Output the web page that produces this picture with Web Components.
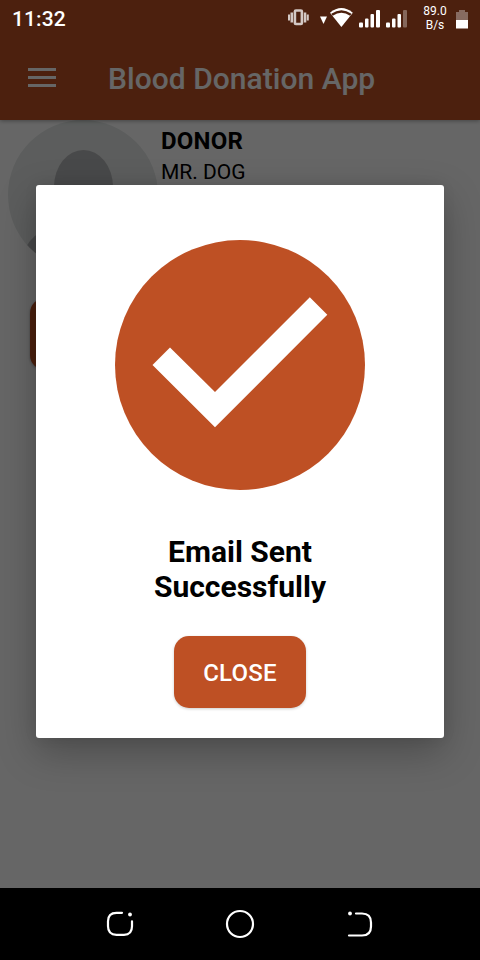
<!DOCTYPE html>
<html lang="en"><head><meta charset="utf-8"><title>Blood Donation App</title>
<style>body{margin:0;font-family:Roboto,"Liberation Sans",sans-serif}</style></head>
<body><donation-app></donation-app>
<script>
const define=(name,html)=>customElements.define(name,class extends HTMLElement{
  constructor(){super();this.attachShadow({mode:'open'}).innerHTML=html}
});

define('status-bar',`<style>
:host{display:flex;height:36px;color:#fff;position:relative;box-sizing:border-box;padding-left:12px}
time{font-size:21px;font-weight:500;line-height:38px;width:268px;flex:none;letter-spacing:.1px}
svg{width:136px;height:36px;flex:none;display:block}
.speed{width:38px;font-size:12px;line-height:14px;padding-top:4px;text-align:center;flex:none}
.battery{width:26px}
</style><time>11:32</time>
<svg viewBox="280 0 136 36">
<g fill="#d3c8c4"><path d="M288 14.500h2v6h-2zM290.500 12.500h2.500v10h-2.500zM303.800 12.500h2.500v10h-2.500zM306.800 14.500h2v6h-2z"/><rect x="294.900" y="10.500" width="7" height="13.500" rx="1" fill="none" stroke="#d3c8c4" stroke-width="2.600"/></g>
<path fill="#fff" d="M320 16.500h7l-3.500 7.500z"/>
<path fill="#fff" d="M330 12.700Q341.400 3.500 352.800 12.700L341.400 27z"/>
<path d="M332 14.800Q341.400 8 350.800 14.800" fill="none" stroke="#4c200e" stroke-width="2.400"/>
<g fill="#fff"><rect x="359" y="22.500" width="4" height="5" rx="1"/><rect x="365" y="18.500" width="3.500" height="9" rx="1"/><rect x="370.500" y="14" width="3.500" height="13.500" rx="1"/><rect x="376" y="10" width="4" height="17.500" rx="1"/>
<rect x="386" y="22.500" width="4" height="5" rx="1"/><rect x="392" y="18.500" width="3.500" height="9" rx="1"/><rect x="397.500" y="14" width="3.500" height="13.500" rx="1"/><rect x="403" y="10" width="4" height="17.500" rx="1" opacity=".32"/></g></svg>
<div class="speed">89.0<br>B/s</div>
<svg class="battery" viewBox="454 0 26 36"><path fill="#876b61" d="M456 12h3v-2h6v2h3v8h-12z"/><path fill="#fff" d="M456 20h12v8.500h-12z"/></svg>`);

define('app-header',`<style>
:host{display:flex;align-items:center;box-sizing:border-box;height:120px;padding:36px 0 0 28px;gap:52px;background:#be5024;color:#fff;box-shadow:0 1px 4px #0005;position:relative}
svg{width:28px;height:20px;margin-top:-2px}h1{margin:2px 0 0;font-size:30px;font-weight:500;line-height:36px;letter-spacing:.03px}
</style><svg viewBox="0 0 28 20"><path d="M0 1h28v3H0zM0 9h28v3H0zM0 17h28v3H0z" fill="#fff"/></svg><h1><slot></slot></h1>`);

define('donor-card',`<style>
:host{display:grid;grid-template-columns:150px 1fr;column-gap:3px;padding-left:8px;color:#000}
svg{width:150px;height:150px;display:block}
b{display:block;font-size:24px;font-weight:700;line-height:28px;margin-top:7px;letter-spacing:.2px}
.name{font-size:21px;line-height:25px;margin-top:5px}
.action{width:200px;height:72px;border-radius:15px;background:#be5024;margin:28px 0 0 22px;box-shadow:0 1px 3px #0005}
</style><svg viewBox="0 0 150 150"><defs><clipPath id="c"><circle cx="75" cy="75" r="75"/></clipPath></defs><g clip-path="url(#c)"><path fill="#e5e9e8" d="M0 0h150v150H0z"/><ellipse cx="75.500" cy="67" rx="29.500" ry="37" fill="#b5b6b8"/><path fill="#b5b6b8" d="M18 127Q24 115 40 108L75 98l35 10q23 9 28 42H10z"/></g></svg>
<div><b><slot name="role"></slot></b><div class="name"><slot name="name"></slot></div></div><div class="action"></div>`);

define('action-button',`<style>:host{display:block}
button{display:block;width:132px;height:72px;border:0;border-radius:15px;background:#be5024;color:#fff;font:500 24px/70px Roboto,"Liberation Sans",sans-serif;letter-spacing:.25px;padding:2px 0 0;box-shadow:0 1px 3px #0003}
</style><button><slot></slot></button>`);

define('success-dialog',`<style>
:host{display:flex;flex-direction:column;align-items:center;box-sizing:border-box;width:408px;height:553px;padding-top:55px;background:#fff;border-radius:3px;color:#000;box-shadow:0 14px 38px #0004,0 0 14px #0001}
svg{width:250px;height:250px;display:block}h2{font-size:30px;line-height:35px;font-weight:700;text-align:center;margin:44px 0 32px;width:220px}
</style><svg viewBox="0 0 250 250"><circle cx="125" cy="125" r="125" fill="#be5024"/><path d="M37.500 125 55 107.500 100 152 194.800 57.300 212.300 74.800 100 187.300z" fill="#fff"/></svg>
<h2><slot></slot></h2><action-button>CLOSE</action-button>`);

define('system-nav',`<style>:host{display:block;height:72px;background:#000}svg{display:block;width:480px;height:72px}</style>
<svg viewBox="0 888 480 72" fill="none" stroke="#fff" stroke-width="2.200" stroke-linecap="round"><path d="M122 912.800h-5.500q-8.500 0-8.500 8.500v5q0 8.500 8.500 8.500h7.500q8 0 8-8.500v-5"/><circle cx="130" cy="914.500" r="1.900" fill="#fff" stroke="none"/><circle cx="240" cy="924" r="13"/><path d="M356 913.500h6q9 0 9 9v4q0 9-9 9h-13"/><circle cx="350" cy="913.500" r="1.900" fill="#fff" stroke="none"/></svg>`);

define('donation-app',`<style>
:host{display:grid;grid-template-rows:888px 72px;width:480px;height:960px;overflow:hidden}
main{background:#fff;position:relative}
.scrim{position:absolute;inset:0;background:#0009;overflow:hidden;display:grid;grid-template-rows:36px auto;justify-items:center;row-gap:149px}
status-bar{width:480px}
</style><main><app-header>Blood Donation App</app-header>
<donor-card><span slot="role">DONOR</span><span slot="name">MR. DOG</span></donor-card>
<div class="scrim"><status-bar></status-bar><success-dialog>Email Sent Successfully</success-dialog></div></main><system-nav></system-nav>`);
</script></body></html>
